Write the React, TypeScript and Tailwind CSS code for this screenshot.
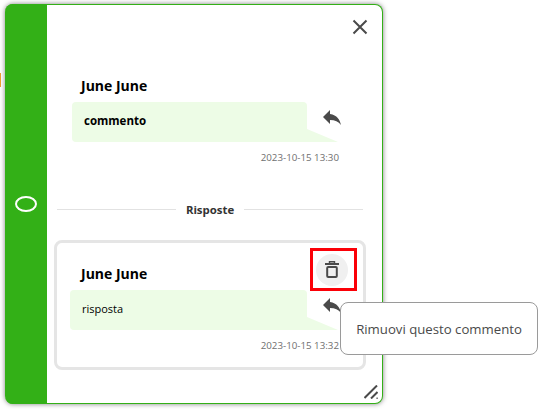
const font = { fontFamily: '"Open Sans", "Noto Sans", sans-serif' };

function ReplyIcon() {
  return (
    <svg viewBox="0 0 24 24" className="w-[24px] h-[24px] text-[#4a4a4a]" fill="currentColor">
      <path d="M10 9V5l-7 7 7 7v-4.1c5 0 8.5 1.6 11 5.1-1-5-4-10-11-11z" />
    </svg>
  );
}

function Bubble({ text, bold, textSize, stamp }: { text: string; bold?: boolean; textSize: string; stamp: string }) {
  return (
    <div>
      <div className="flex">
        <div className="relative flex-1 h-[40px] bg-[#edfce6] rounded-l-[4px] rounded-tr-[4px] flex items-center pl-[12px]">
          <span className={`${textSize} -mt-[2px] text-black ${bold ? 'font-bold' : ''}`}>{text}</span>
          <div className="absolute left-full bottom-0 w-[31px] h-[13px] bg-[#edfce6] [clip-path:polygon(0_0,100%_100%,0_100%)]" />
        </div>
        <div className="w-[56px] pl-[13px] pt-[3px] flex items-start">
          <ReplyIcon />
        </div>
      </div>
      <div className="text-right text-[9.75px] leading-[14px] text-[#6f6f6f] mt-[9px] pr-[24px]">{stamp}</div>
    </div>
  );
}

export default function App() {
  return (
    <div className="relative w-[544px] h-[412px] bg-white overflow-hidden pt-[4px] pl-[5px]" style={font}>
      <div className="absolute left-0 top-[73px] w-[1px] h-[14px] bg-[#f0a030]" />
      <div className="relative w-[378px] h-[400px] flex rounded-[8px] border-t border-r border-b border-[#33b017] bg-white shadow-[0_0_5px_rgba(0,0,0,0.5)]">
        <div className="w-[42px] -my-[1px] bg-[#33b017] rounded-l-[8px] flex items-center justify-center shrink-0">
          <div className="w-[22px] h-[16px] rounded-[50%] border-[2px] border-white" />
        </div>
        <div className="flex-1 flex flex-col pl-[10px] pr-[19px]">
          <button className="absolute right-[14px] top-[14px] text-[#4a4a4a]">
            <svg viewBox="0 0 16 16" className="w-[16px] h-[16px]" stroke="currentColor" strokeWidth="2" fill="none">
              <path d="M1.5 1.5l13 13M14.5 1.5l-13 13" />
            </svg>
          </button>
          <div className="pl-[24px] pt-[71px] h-[97px] text-[14px] leading-[20px] font-bold text-black">June June</div>
          <div className="pl-[15px]">
            <Bubble text="commento" bold textSize="text-[11.5px]" stamp="2023-10-15 13:30" />
          </div>
          <div className="flex items-center mt-[34px] h-[20px] text-[11.4px] font-bold text-[#333333]">
            <div className="flex-1 h-[1px] bg-[#e2e2e2]" />
            <span className="px-[10px] mt-[2px]">Risposte</span>
            <div className="flex-1 h-[1px] bg-[#e2e2e2]" />
          </div>
          <div className="mt-[21px] -mx-[3px] h-[130px] rounded-[8px] border-[3px] border-[#e5e5e5]">
            <div className="flex items-end justify-between pl-[24px] pr-[6px] pt-[5px]">
              <span className="text-[14px] leading-[20px] font-bold text-black mb-[7px]">June June</span>
              <div className="w-[47px] h-[43px] border-[3px] border-[#fb0007] flex items-center pl-[3px]">
                <div className="w-[32px] h-[32px] rounded-full bg-[#f0f0f0] flex items-center justify-center">
                  <svg viewBox="0 0 14 17" className="w-[14px] h-[17px] text-[#4a4a4a]" fill="none" stroke="currentColor">
                    <path d="M0 3h14" strokeWidth="2" />
                    <path d="M4.5 2V0.7h5V2" strokeWidth="1.4" />
                    <rect x="2.2" y="6" width="9.6" height="10" rx="1" strokeWidth="2" />
                  </svg>
                </div>
              </div>
            </div>
            <div className="-mt-[1px] pl-[13px]">
              <Bubble text="risposta" textSize="text-[11px]" stamp="2023-10-15 13:32" />
            </div>
          </div>
          <svg viewBox="0 0 14 14" className="absolute right-[4px] bottom-[4px] w-[14px] h-[14px] text-[#4a4a4a]" stroke="currentColor" strokeWidth="2" fill="none">
            <path d="M0.5 13L13 0.5M7 13.5L13.5 7M12.5 13.5h1.2" />
          </svg>
        </div>
      </div>
      <div className="absolute left-[340px] top-[302px] w-[198px] h-[53px] rounded-[8px] border border-[#9a9a9a] bg-white flex items-center justify-center text-[13.2px] text-[#4a4a4a]">
        <span className="mt-[2px]">Rimuovi questo commento</span>
      </div>
    </div>
  );
}
